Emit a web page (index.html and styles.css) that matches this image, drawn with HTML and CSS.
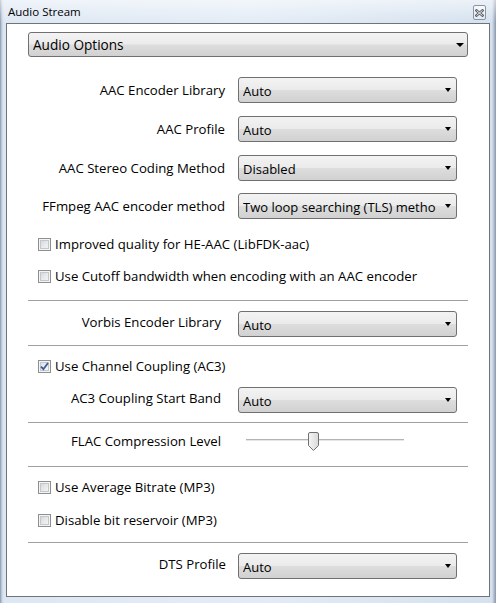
FILE: index.html
```html
<!DOCTYPE html>
<html>
<head>
<meta charset="utf-8">
<title>Audio Stream</title>
<link rel="stylesheet" href="styles.css">
</head>
<body>
<div class="window">
  <div class="titlebar">
    <span class="title">Audio Stream</span>
    <span class="close">
      <svg width="9" height="8" viewBox="0 0 9 8">
        <path d="M1.5 1.5 L7.5 6.5 M7.5 1.5 L1.5 6.5" stroke="#5a5f66" stroke-width="2.6" stroke-linecap="square" fill="none"/>
        <path d="M1.5 1.5 L7.5 6.5 M7.5 1.5 L1.5 6.5" stroke="#ffffff" stroke-width="0.9" fill="none"/>
      </svg>
    </span>
  </div>
  <div class="panel">
    <div class="combo combo-main"><span class="combo-text">Audio Options</span><i class="arrow"></i></div>

    <div class="field r-aac1"><span class="lbl">AAC Encoder Library</span><div class="combo"><span class="combo-text">Auto</span><i class="arrow"></i></div></div>
    <div class="field r-gap13"><span class="lbl">AAC Profile</span><div class="combo"><span class="combo-text">Auto</span><i class="arrow"></i></div></div>
    <div class="field r-gap13"><span class="lbl">AAC Stereo Coding Method</span><div class="combo"><span class="combo-text">Disabled</span><i class="arrow"></i></div></div>
    <div class="field r-gap12"><span class="lbl">FFmpeg AAC encoder method</span><div class="combo"><span class="combo-text">Two loop searching (TLS) metho</span><i class="arrow"></i></div></div>

    <div class="check r-chk1"><span class="box"></span><span class="chk-text">Improved quality for HE-AAC (LibFDK-aac)</span></div>
    <div class="check r-chk2"><span class="box"></span><span class="chk-text">Use Cutoff bandwidth when encoding with an AAC encoder</span></div>

    <div class="sep s1"></div>

    <div class="field r-vorbis"><span class="lbl lbl-narrow lbl-up">Vorbis Encoder Library</span><div class="combo"><span class="combo-text">Auto</span><i class="arrow"></i></div></div>

    <div class="sep s2"></div>

    <div class="check r-chk3"><span class="box checked"><svg width="9" height="9" viewBox="0 0 9 9"><path d="M1 4.6 L3.4 7.2 L8 1" stroke="#3b5a9e" stroke-width="1.8" fill="none"/></svg></span><span class="chk-text">Use Channel Coupling (AC3)</span></div>

    <div class="field r-ac3"><span class="lbl lbl-narrow lbl-up">AC3 Coupling Start Band</span><div class="combo"><span class="combo-text">Auto</span><i class="arrow"></i></div></div>

    <div class="sep s3"></div>

    <div class="field r-flac"><span class="lbl lbl-narrow">FLAC Compression Level</span>
      <div class="slider">
        <div class="track"></div>
        <svg class="thumb" width="11" height="19" viewBox="0 0 11 19">
          <defs><linearGradient id="tg" x1="0" y1="0" x2="1" y2="0"><stop offset="0" stop-color="#f6f6f6"/><stop offset="1" stop-color="#d9d9d9"/></linearGradient></defs>
          <path d="M2 0.5 H9 Q10.5 0.5 10.5 2 V13.5 L5.5 18.5 L0.5 13.5 V2 Q0.5 0.5 2 0.5 Z" fill="url(#tg)" stroke="#707070" stroke-width="1"/>
        </svg>
      </div>
    </div>

    <div class="sep s4"></div>

    <div class="check r-chk4"><span class="box"></span><span class="chk-text">Use Average Bitrate (MP3)</span></div>
    <div class="check r-chk5"><span class="box"></span><span class="chk-text">Disable bit reservoir (MP3)</span></div>

    <div class="sep s5"></div>

    <div class="field r-dts"><span class="lbl lbl-wide lbl-up">DTS Profile</span><div class="combo"><span class="combo-text">Auto</span><i class="arrow"></i></div></div>
  </div>
</div>
</body>
</html>
```

FILE: styles.css
```css
html, body {
  margin: 0;
  padding: 0;
}
body {
  width: 496px;
  height: 603px;
  overflow: hidden;
  font-family: "Open Sans", "Noto Sans", sans-serif;
  font-size: 12px;
  color: #000;
}
.window {
  width: 496px;
  height: 603px;
  box-sizing: border-box;
  display: flex;
  flex-direction: column;
  background: linear-gradient(90deg, #8a96a6 0, #c9d6e6 2px, #dde7f3 4px, #e3ecf6 50%, #d5e1ef calc(100% - 4px), #8a96a6 100%);
}
.titlebar {
  height: 23px;
  display: flex;
  align-items: center;
  padding-left: 8px;
  padding-right: 10px;
  background: linear-gradient(180deg, rgba(255,255,255,0.55) 0, rgba(255,255,255,0.2) 60%, rgba(255,255,255,0) 100%);
}
.title {
  flex: 1;
  font-size: 11.5px;
  line-height: 16px;
  padding-top: 1px;
}
.close {
  width: 11px;
  height: 13px;
  border: 1px solid #8a95a4;
  border-radius: 2px;
  background: linear-gradient(180deg, #f7f9fc 0, #e4eaf2 100%);
  display: flex;
  align-items: center;
  justify-content: center;
  margin-top: 2px;
}
.panel {
  flex: 1;
  margin: 0 6px 6px 6px;
  border: 1px solid #6f737a;
  background: #fff;
  padding: 0 21px;
  display: flex;
  flex-direction: column;
}
.combo {
  box-sizing: border-box;
  height: 26px;
  width: 219px;
  border: 1px solid #707070;
  border-radius: 3px;
  background: linear-gradient(180deg, #f3f3f3 0, #ebebeb 48%, #dddddd 52%, #d1d1d1 100%);
  display: flex;
  align-items: center;
  padding: 0 5px 0 4px;
}
.combo-text {
  flex: 1;
  font-size: 13px;
  line-height: 18px;
  padding-top: 2px;
  white-space: nowrap;
  overflow: hidden;
}
.arrow {
  width: 0;
  height: 0;
  border-left: 3.5px solid transparent;
  border-right: 3.5px solid transparent;
  border-top: 4px solid #000;
  margin-left: 4px;
}
.combo-main {
  width: auto;
  height: 25px;
  margin-top: 8px;
  padding-right: 3px;
}
.combo-main .combo-text {
  font-size: 13.6px;
  line-height: 20px;
  padding-top: 0;
}
.combo-main .arrow {
  border-left-width: 4px;
  border-right-width: 4px;
}
.field {
  display: flex;
  align-items: center;
  height: 26px;
}
.lbl {
  box-sizing: border-box;
  width: 197px;
  margin-right: 13px;
  text-align: right;
  white-space: nowrap;
  font-size: 13.2px;
}
.lbl-narrow {
  padding-right: 4px;
}
.lbl-wide {
  width: 198px;
  margin-right: 12px;
}
.lbl-up {
  padding-bottom: 5px;
}
.r-aac1 { margin-top: 20px; }
.r-gap13 { margin-top: 13px; }
.r-gap12 { margin-top: 12px; }
.check {
  display: flex;
  align-items: center;
  height: 20px;
  padding-left: 10px;
}
.box {
  box-sizing: border-box;
  width: 13px;
  height: 13px;
  border: 1px solid #8e8f8f;
  background: linear-gradient(135deg, #cdd0d4 0, #e6e8ea 50%, #f8f8f8 100%);
  box-shadow: inset 0 0 0 1px #f4f4f4, inset 0 0 0 2px #c4c7cb;
  display: flex;
  align-items: center;
  justify-content: center;
  margin-right: 4px;
}
.box.checked {
  background: linear-gradient(135deg, #d8dbe0 0, #eef0f2 60%, #fafafa 100%);
}
.chk-text {
  font-size: 13.2px;
  white-space: nowrap;
}
.r-chk1 { margin-top: 15px; }
.r-chk2 { margin-top: 12px; }
.sep {
  height: 1px;
  background: #a0a0a0;
}
.s1 { margin-top: 14px; }
.r-vorbis { margin-top: 10px; }
.s2 { margin-top: 8px; }
.r-chk3 { margin-top: 10px; }
.r-ac3 { margin-top: 11px; }
.s3 { margin-top: 9px; }
.r-flac { margin-top: 5px; }
.s4 { margin-top: 12px; }
.r-chk4 { margin-top: 10px; }
.r-chk5 { margin-top: 13px; }
.s5 { margin-top: 12px; }
.r-dts { margin-top: 10px; }
.slider {
  position: relative;
  width: 158px;
  height: 26px;
  margin-left: 8px;
  display: flex;
  align-items: center;
}
.track {
  width: 100%;
  height: 2px;
  background: linear-gradient(180deg, #b4b4b4 0, #b4b4b4 50%, #e6e6e6 50%, #e6e6e6 100%);
  margin-top: -2px;
}
.thumb {
  position: absolute;
  left: 62px;
  top: 4px;
}
```
